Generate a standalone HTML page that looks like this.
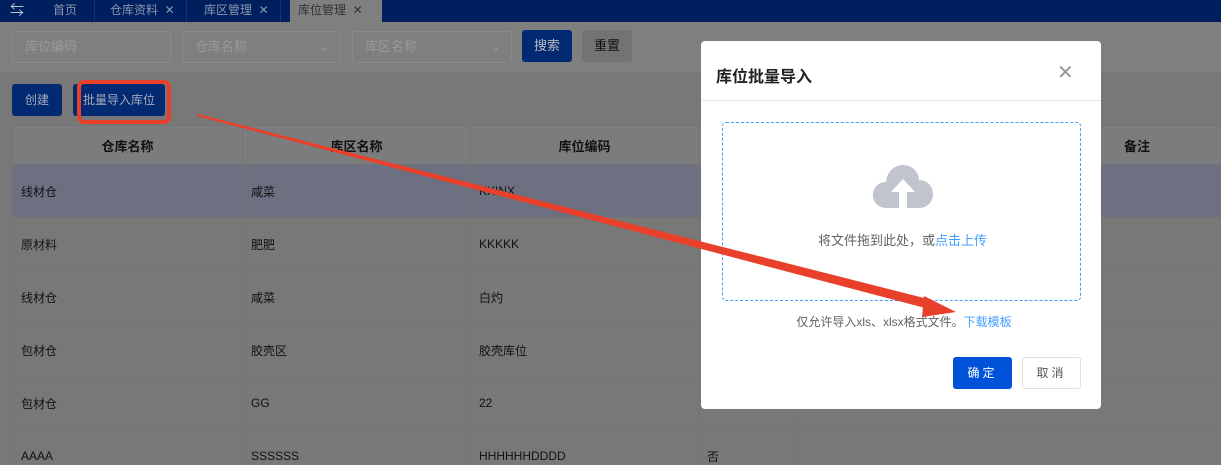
<!DOCTYPE html><html><head><meta charset="utf-8"><style>
*{margin:0;padding:0;box-sizing:border-box}
html,body{width:1221px;height:465px;overflow:hidden}
body{position:relative;background:#7f7f7f;font-family:"Liberation Sans","Noto Sans CJK SC",sans-serif;font-size:12px;color:#111}
.abs{position:absolute}
.tabs{left:0;top:0;width:1221px;height:22px;background:#001f5e}
.tab{position:absolute;top:0;height:22px;line-height:20px;color:#8b96ad;font-size:12px;white-space:nowrap}
.inp{position:absolute;top:31px;height:32px;border:1px solid #8a8a8a;border-radius:3px;color:#9a9a9a;font-size:13px;line-height:30px;padding-left:12px}
.btn{position:absolute;border-radius:3px;font-size:12px;text-align:center}
.grid{position:absolute;left:12px;top:125px;width:1209px}
.row{position:absolute;left:0;width:1209px;border-bottom:1px solid #747474}
.c{position:absolute;top:0;height:100%;border-left:1px solid #747474;padding-left:8px;display:flex;align-items:center}
</style></head><body>
<div class="abs tabs">
<div class="tab" style="left:10px;color:#bcc5d6;font-size:14px">⇆</div>
<div class="tab" style="left:53px">首页</div>
<div class="abs" style="top:0;width:1px;height:22px;background:#1b3370;left:94px"></div>
<div class="tab" style="left:110px">仓库资料 &nbsp;✕</div>
<div class="abs" style="left:186px;top:0;width:1px;height:22px;background:#1b3370"></div>
<div class="tab" style="left:204px">库区管理 &nbsp;✕</div>
<div class="abs" style="top:0;width:1px;height:22px;background:#1b3370;left:280px"></div>
<div class="tab" style="left:290px;width:92px;background:#7f7f7f;color:#333;padding-left:8px">库位管理 &nbsp;✕</div>
</div>
<div class="abs" style="left:0;top:22px;width:1221px;height:51px;background:#7f7f7f;border-bottom:1px solid #777"></div>
<div class="inp" style="left:12px;width:159px">库位编码</div>
<div class="inp" style="left:182px;width:159px">仓库名称<span style="position:absolute;right:10px;color:#999">⌄</span></div>
<div class="inp" style="left:352px;width:160px">库区名称<span style="position:absolute;right:10px;color:#999">⌄</span></div>
<div class="btn" style="left:522px;top:30px;width:50px;height:32px;background:#012a73;color:#bbb;line-height:32px;font-size:13px">搜索</div>
<div class="btn" style="left:582px;top:30px;width:50px;height:32px;background:#717375;color:#111;line-height:32px;font-size:13px">重置</div>
<div class="abs" style="left:0;top:74px;width:1221px;height:391px;background:#787878"></div>
<div class="btn" style="left:12px;top:84px;width:50px;height:32px;background:#012a73;color:#aab;line-height:32px">创建</div>
<div class="btn" style="left:73px;top:84px;width:92px;height:32px;background:#012a73;color:#aab;line-height:32px">批量导入库位</div>
<div class="abs" style="left:77px;top:80px;width:94px;height:44px;border:4px solid #e8402a;border-radius:7px"></div>
<div class="grid">
<div class="row" style="top:0;height:40px;background:#7b7c7d;border-top:1px solid #747474;font-weight:bold;font-size:13px">
<div class="c" style="left:0;width:230px;justify-content:center;padding:0">仓库名称</div>
<div class="c" style="left:230px;width:228px;justify-content:center;padding:0">库区名称</div>
<div class="c" style="left:458px;width:228px;justify-content:center;padding:0">库位编码</div>
<div class="c" style="left:686px;width:100px"></div>
<div class="c" style="left:786px;width:423px;padding-left:325px">备注</div></div>
<div class="row" style="top:40px;height:53px;background:#6c7080"><div class="c" style="left:0">线材仓</div><div class="c" style="left:230px">咸菜</div><div class="c" style="left:458px">KXINX</div><div class="c" style="left:686px"></div><div class="c" style="left:786px"></div></div>
<div class="row" style="top:93px;height:53px"><div class="c" style="left:0">原材料</div><div class="c" style="left:230px">肥肥</div><div class="c" style="left:458px">KKKKK</div><div class="c" style="left:686px"></div><div class="c" style="left:786px"></div></div>
<div class="row" style="top:146px;height:53px"><div class="c" style="left:0">线材仓</div><div class="c" style="left:230px">咸菜</div><div class="c" style="left:458px">白灼</div><div class="c" style="left:686px"></div><div class="c" style="left:786px"></div></div>
<div class="row" style="top:199px;height:53px"><div class="c" style="left:0">包材仓</div><div class="c" style="left:230px">胶壳区</div><div class="c" style="left:458px">胶壳库位</div><div class="c" style="left:686px"></div><div class="c" style="left:786px"></div></div>
<div class="row" style="top:252px;height:53px"><div class="c" style="left:0">包材仓</div><div class="c" style="left:230px">GG</div><div class="c" style="left:458px">22</div><div class="c" style="left:686px"></div><div class="c" style="left:786px"></div></div>
<div class="row" style="top:305px;height:53px"><div class="c" style="left:0">AAAA</div><div class="c" style="left:230px">SSSSSS</div><div class="c" style="left:458px">HHHHHHDDDD</div><div class="c" style="left:686px">否</div><div class="c" style="left:786px"></div></div>
</div>
<div class="abs" style="left:701px;top:41px;width:400px;height:368px;background:#fff;border-radius:4px">
<div class="abs" style="left:15px;top:22px;font-size:16px;font-weight:bold;color:#222">库位批量导入</div>
<div class="abs" style="left:356px;top:22px;font-size:20px;color:#999;line-height:20px">✕</div>
<div class="abs" style="left:0;top:59px;width:400px;height:1px;background:#e4e4e4"></div>
<div class="abs" style="left:21px;top:81px;width:359px;height:179px;border:1px dashed #409eff;border-radius:4px">
<svg class="abs" style="left:150px;top:40px" width="60" height="46" viewBox="0 0 60 46"><path d="M14 45 C4 45 0 38 0 32 C0 24 6 19 13 19 C14 8 22 2 30 2 C39 2 46 9 46 17 C54 17 60 23 60 31 C60 39 54 45 46 45 Z" fill="#c0c4cc"/><path d="M30 16 L42 29 L34 29 L34 45 L26 45 L26 29 L18 29 Z" fill="#fff"/></svg>
<div class="abs" style="left:0;top:107px;width:359px;text-align:center;font-size:13px;color:#606266">将文件拖到此处，或<span style="color:#409eff">点击上传</span></div>
</div>
<div class="abs" style="left:0;top:272px;width:400px;text-align:center;font-size:12px;color:#606266;padding-left:6px">仅允许导入xls、xlsx格式文件。<span style="color:#409eff">下载模板</span></div>
<div class="btn" style="left:252px;top:316px;width:59px;height:32px;background:#0052d9;color:#fff;line-height:32px;letter-spacing:3px">确定</div>
<div class="btn" style="left:321px;top:316px;width:59px;height:32px;border:1px solid #dcdfe6;color:#555;line-height:30px;letter-spacing:3px">取消</div>
</div>
<svg class="abs" style="left:0;top:0" width="1221" height="465"><polygon points="198,114 932,300 929,309 197,116" fill="#e8402a"/><polygon points="924,296 956,312 922,317" fill="#e8402a"/></svg>
</body></html>
